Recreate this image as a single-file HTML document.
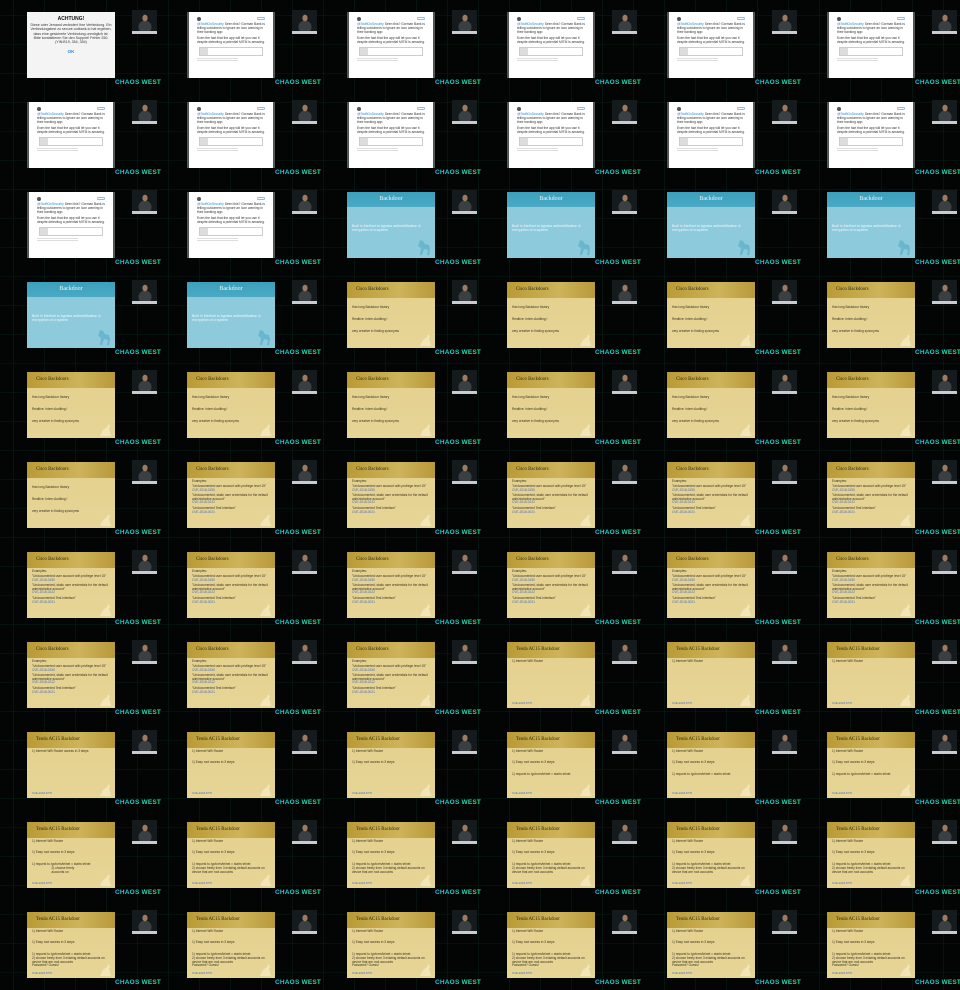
<!DOCTYPE html>
<html><head><meta charset="utf-8"><style>
*{margin:0;padding:0;box-sizing:border-box}
body{width:960px;height:990px;background:#020504;overflow:hidden;font-family:"Liberation Sans",sans-serif;
background-image:repeating-linear-gradient(90deg,rgba(0,0,0,0) 0 13px,rgba(20,60,45,.25) 13px 14px,rgba(0,0,0,0) 14px 31px),repeating-linear-gradient(0deg,rgba(0,0,0,0) 0 17px,rgba(20,60,45,.2) 17px 18px,rgba(0,0,0,0) 18px 29px);}
#g{display:flex;flex-wrap:wrap;width:960px}
.c{position:relative;width:160px;height:90px}
.p{position:absolute;left:132px;top:10px;width:25px;height:24px;background:radial-gradient(ellipse 4px 5px at 13px 8px,#a07a60 60%,transparent 70%),radial-gradient(ellipse 9px 9px at 13px 17px,#3a3f44 70%,transparent 75%),#151a1c;border-bottom:3px solid #c8ccd0}
.w{position:absolute;left:115px;top:79px;font-size:6.5px;font-weight:bold;letter-spacing:.2px;background:linear-gradient(90deg,#18c8e8,#2ee890);-webkit-background-clip:text;color:transparent;white-space:nowrap}
.s{position:absolute;left:27px;top:12px;width:88px;height:66px;overflow:hidden;font-size:3.2px;line-height:3.8px}
.a{background:#f4f4f4;text-align:center;color:#333;padding:4px 3px}
.a h4{font-size:5px;line-height:6px;margin-bottom:1px;color:#111}
.a p{font-size:3.6px;line-height:4.3px}
.a b{display:block;color:#2a8ae0;font-size:4.5px;margin-top:6px}
.t{background:#fff;border-left:2px solid #555;border-right:2px solid #555;padding:5px 8px 0;color:#333}
.t .av{display:block;width:4px;height:4px;background:#555;border-radius:50%;margin-bottom:2px}
.t .fl{position:absolute;right:8px;top:5px;width:8px;height:3px;border:.5px solid #8bf;border-radius:2px}
.t p{margin-bottom:2.5px;font-size:3.3px}
.t p i{color:#2a8ae0;font-style:normal}
.t .bx{display:block;height:9px;margin:2px 2px;border:.5px solid #ccc;background:linear-gradient(90deg,#ddd 0 8px,#fff 8px)}
.t .ft{height:1px;background:#ddd;margin:1px 0;width:60%}
.b{background:#8dcbdc}
.b h4{height:15px;background:linear-gradient(#3b9fbc,#4aaac4);color:#e8f6fa;font-family:"Liberation Serif",serif;font-size:6px;line-height:15px;text-align:center;font-weight:normal}
.b p{color:#eef8fb;font-size:3.6px;line-height:4.2px;padding:17px 5px 0}
.y{background:linear-gradient(#e4d08c,#e6d597);color:#3a3320}
.y h4{height:16px;background:linear-gradient(90deg,#b99a35,#cdb35a 60%,#b8993a);font-family:"Liberation Serif",serif;font-weight:normal;font-size:4.8px;line-height:16px;padding-left:9px;color:#2e2818}
.y p{padding:0 5px;margin-top:1.5px}
.y .l{margin-top:8px}
.y p.u{color:#4a6aa8}
.y .ft{position:absolute;left:5px;bottom:2px;color:#4a6aa8;font-size:2.8px}
.cat{position:absolute;right:3px;bottom:2px;width:14px;height:12px}
.horse{position:absolute;right:3px;bottom:2px;width:16px;height:18px}
</style></head><body><div id="g">
<!-- row 0 -->
<div class="c"><div class="s a"><h4>ACHTUNG!</h4><p>Diese oder Jemand verändert Ihre Verbindung. Ein Verbindungstest zu secure.outbank.io hat ergeben, dass eine gesicherte Verbindung unmöglich ist. Bitte kontaktieren Sie den Support! Fehler 250. (YIN:B19, 354, 354)</p><b>OK</b></div><div class="p"></div><b class="w">CHAOS WEST</b></div>
<div class="c"><div class="s t"><i class="av"></i><i class="fl"></i><p><i>@SwiftOnSecurity</i> Seen this? Gorman Bank is telling customers to ignore an icon warning in their banking app.</p><p>Even the fact that the app will let you use it despite detecting a potential MITM is amazing.</p><i class="bx"></i><div class="ft"></div><div class="ft"></div></div><div class="p"></div><b class="w">CHAOS WEST</b></div>
<div class="c"><div class="s t"><i class="av"></i><i class="fl"></i><p><i>@SwiftOnSecurity</i> Seen this? Gorman Bank is telling customers to ignore an icon warning in their banking app.</p><p>Even the fact that the app will let you use it despite detecting a potential MITM is amazing.</p><i class="bx"></i><div class="ft"></div><div class="ft"></div></div><div class="p"></div><b class="w">CHAOS WEST</b></div>
<div class="c"><div class="s t"><i class="av"></i><i class="fl"></i><p><i>@SwiftOnSecurity</i> Seen this? Gorman Bank is telling customers to ignore an icon warning in their banking app.</p><p>Even the fact that the app will let you use it despite detecting a potential MITM is amazing.</p><i class="bx"></i><div class="ft"></div><div class="ft"></div></div><div class="p"></div><b class="w">CHAOS WEST</b></div>
<div class="c"><div class="s t"><i class="av"></i><i class="fl"></i><p><i>@SwiftOnSecurity</i> Seen this? Gorman Bank is telling customers to ignore an icon warning in their banking app.</p><p>Even the fact that the app will let you use it despite detecting a potential MITM is amazing.</p><i class="bx"></i><div class="ft"></div><div class="ft"></div></div><div class="p"></div><b class="w">CHAOS WEST</b></div>
<div class="c"><div class="s t"><i class="av"></i><i class="fl"></i><p><i>@SwiftOnSecurity</i> Seen this? Gorman Bank is telling customers to ignore an icon warning in their banking app.</p><p>Even the fact that the app will let you use it despite detecting a potential MITM is amazing.</p><i class="bx"></i><div class="ft"></div><div class="ft"></div></div><div class="p"></div><b class="w">CHAOS WEST</b></div>
<!-- row 1 -->
<div class="c"><div class="s t"><i class="av"></i><i class="fl"></i><p><i>@SwiftOnSecurity</i> Seen this? Gorman Bank is telling customers to ignore an icon warning in their banking app.</p><p>Even the fact that the app will let you use it despite detecting a potential MITM is amazing.</p><i class="bx"></i><div class="ft"></div><div class="ft"></div></div><div class="p"></div><b class="w">CHAOS WEST</b></div>
<div class="c"><div class="s t"><i class="av"></i><i class="fl"></i><p><i>@SwiftOnSecurity</i> Seen this? Gorman Bank is telling customers to ignore an icon warning in their banking app.</p><p>Even the fact that the app will let you use it despite detecting a potential MITM is amazing.</p><i class="bx"></i><div class="ft"></div><div class="ft"></div></div><div class="p"></div><b class="w">CHAOS WEST</b></div>
<div class="c"><div class="s t"><i class="av"></i><i class="fl"></i><p><i>@SwiftOnSecurity</i> Seen this? Gorman Bank is telling customers to ignore an icon warning in their banking app.</p><p>Even the fact that the app will let you use it despite detecting a potential MITM is amazing.</p><i class="bx"></i><div class="ft"></div><div class="ft"></div></div><div class="p"></div><b class="w">CHAOS WEST</b></div>
<div class="c"><div class="s t"><i class="av"></i><i class="fl"></i><p><i>@SwiftOnSecurity</i> Seen this? Gorman Bank is telling customers to ignore an icon warning in their banking app.</p><p>Even the fact that the app will let you use it despite detecting a potential MITM is amazing.</p><i class="bx"></i><div class="ft"></div><div class="ft"></div></div><div class="p"></div><b class="w">CHAOS WEST</b></div>
<div class="c"><div class="s t"><i class="av"></i><i class="fl"></i><p><i>@SwiftOnSecurity</i> Seen this? Gorman Bank is telling customers to ignore an icon warning in their banking app.</p><p>Even the fact that the app will let you use it despite detecting a potential MITM is amazing.</p><i class="bx"></i><div class="ft"></div><div class="ft"></div></div><div class="p"></div><b class="w">CHAOS WEST</b></div>
<div class="c"><div class="s t"><i class="av"></i><i class="fl"></i><p><i>@SwiftOnSecurity</i> Seen this? Gorman Bank is telling customers to ignore an icon warning in their banking app.</p><p>Even the fact that the app will let you use it despite detecting a potential MITM is amazing.</p><i class="bx"></i><div class="ft"></div><div class="ft"></div></div><div class="p"></div><b class="w">CHAOS WEST</b></div>
<!-- row 2 -->
<div class="c"><div class="s t"><i class="av"></i><i class="fl"></i><p><i>@SwiftOnSecurity</i> Seen this? Gorman Bank is telling customers to ignore an icon warning in their banking app.</p><p>Even the fact that the app will let you use it despite detecting a potential MITM is amazing.</p><i class="bx"></i><div class="ft"></div><div class="ft"></div></div><div class="p"></div><b class="w">CHAOS WEST</b></div>
<div class="c"><div class="s t"><i class="av"></i><i class="fl"></i><p><i>@SwiftOnSecurity</i> Seen this? Gorman Bank is telling customers to ignore an icon warning in their banking app.</p><p>Even the fact that the app will let you use it despite detecting a potential MITM is amazing.</p><i class="bx"></i><div class="ft"></div><div class="ft"></div></div><div class="p"></div><b class="w">CHAOS WEST</b></div>
<div class="c"><div class="s b"><h4>Backdoor</h4><p>Built in Method to bypass authentification &amp; encryption of a system</p><svg class="horse" viewBox="0 0 16 18"><path d="M4 2l3 1 2 3 4 1 1 4-1 6h-2l1-5-4-1-2 6H4l1-7-3-2z" fill="#6ab6cf"/></svg></div><div class="p"></div><b class="w">CHAOS WEST</b></div>
<div class="c"><div class="s b"><h4>Backdoor</h4><p>Built in Method to bypass authentification &amp; encryption of a system</p><svg class="horse" viewBox="0 0 16 18"><path d="M4 2l3 1 2 3 4 1 1 4-1 6h-2l1-5-4-1-2 6H4l1-7-3-2z" fill="#6ab6cf"/></svg></div><div class="p"></div><b class="w">CHAOS WEST</b></div>
<div class="c"><div class="s b"><h4>Backdoor</h4><p>Built in Method to bypass authentification &amp; encryption of a system</p><svg class="horse" viewBox="0 0 16 18"><path d="M4 2l3 1 2 3 4 1 1 4-1 6h-2l1-5-4-1-2 6H4l1-7-3-2z" fill="#6ab6cf"/></svg></div><div class="p"></div><b class="w">CHAOS WEST</b></div>
<div class="c"><div class="s b"><h4>Backdoor</h4><p>Built in Method to bypass authentification &amp; encryption of a system</p><svg class="horse" viewBox="0 0 16 18"><path d="M4 2l3 1 2 3 4 1 1 4-1 6h-2l1-5-4-1-2 6H4l1-7-3-2z" fill="#6ab6cf"/></svg></div><div class="p"></div><b class="w">CHAOS WEST</b></div>
<!-- row 3 -->
<div class="c"><div class="s b"><h4>Backdoor</h4><p>Built in Method to bypass authentification &amp; encryption of a system</p><svg class="horse" viewBox="0 0 16 18"><path d="M4 2l3 1 2 3 4 1 1 4-1 6h-2l1-5-4-1-2 6H4l1-7-3-2z" fill="#6ab6cf"/></svg></div><div class="p"></div><b class="w">CHAOS WEST</b></div>
<div class="c"><div class="s b"><h4>Backdoor</h4><p>Built in Method to bypass authentification &amp; encryption of a system</p><svg class="horse" viewBox="0 0 16 18"><path d="M4 2l3 1 2 3 4 1 1 4-1 6h-2l1-5-4-1-2 6H4l1-7-3-2z" fill="#6ab6cf"/></svg></div><div class="p"></div><b class="w">CHAOS WEST</b></div>
<div class="c"><div class="s y"><h4>Cisco Backdoors</h4><p class="l">Has long Backdoor history</p><p class="l">Realtive: Intern Auditing !</p><p class="l">very creative in finding synonyms</p><svg class="cat" viewBox="0 0 14 12"><path d="M2 12l3-6 4-3 1-3 2 2-1 3 2 7z" fill="#f2e6b8"/></svg></div><div class="p"></div><b class="w">CHAOS WEST</b></div>
<div class="c"><div class="s y"><h4>Cisco Backdoors</h4><p class="l">Has long Backdoor history</p><p class="l">Realtive: Intern Auditing !</p><p class="l">very creative in finding synonyms</p><svg class="cat" viewBox="0 0 14 12"><path d="M2 12l3-6 4-3 1-3 2 2-1 3 2 7z" fill="#f2e6b8"/></svg></div><div class="p"></div><b class="w">CHAOS WEST</b></div>
<div class="c"><div class="s y"><h4>Cisco Backdoors</h4><p class="l">Has long Backdoor history</p><p class="l">Realtive: Intern Auditing !</p><p class="l">very creative in finding synonyms</p><svg class="cat" viewBox="0 0 14 12"><path d="M2 12l3-6 4-3 1-3 2 2-1 3 2 7z" fill="#f2e6b8"/></svg></div><div class="p"></div><b class="w">CHAOS WEST</b></div>
<div class="c"><div class="s y"><h4>Cisco Backdoors</h4><p class="l">Has long Backdoor history</p><p class="l">Realtive: Intern Auditing !</p><p class="l">very creative in finding synonyms</p><svg class="cat" viewBox="0 0 14 12"><path d="M2 12l3-6 4-3 1-3 2 2-1 3 2 7z" fill="#f2e6b8"/></svg></div><div class="p"></div><b class="w">CHAOS WEST</b></div>
<!-- row 4 -->
<div class="c"><div class="s y"><h4>Cisco Backdoors</h4><p class="l">Has long Backdoor history</p><p class="l">Realtive: Intern Auditing !</p><p class="l">very creative in finding synonyms</p><svg class="cat" viewBox="0 0 14 12"><path d="M2 12l3-6 4-3 1-3 2 2-1 3 2 7z" fill="#f2e6b8"/></svg></div><div class="p"></div><b class="w">CHAOS WEST</b></div>
<div class="c"><div class="s y"><h4>Cisco Backdoors</h4><p class="l">Has long Backdoor history</p><p class="l">Realtive: Intern Auditing !</p><p class="l">very creative in finding synonyms</p><svg class="cat" viewBox="0 0 14 12"><path d="M2 12l3-6 4-3 1-3 2 2-1 3 2 7z" fill="#f2e6b8"/></svg></div><div class="p"></div><b class="w">CHAOS WEST</b></div>
<div class="c"><div class="s y"><h4>Cisco Backdoors</h4><p class="l">Has long Backdoor history</p><p class="l">Realtive: Intern Auditing !</p><p class="l">very creative in finding synonyms</p><svg class="cat" viewBox="0 0 14 12"><path d="M2 12l3-6 4-3 1-3 2 2-1 3 2 7z" fill="#f2e6b8"/></svg></div><div class="p"></div><b class="w">CHAOS WEST</b></div>
<div class="c"><div class="s y"><h4>Cisco Backdoors</h4><p class="l">Has long Backdoor history</p><p class="l">Realtive: Intern Auditing !</p><p class="l">very creative in finding synonyms</p><svg class="cat" viewBox="0 0 14 12"><path d="M2 12l3-6 4-3 1-3 2 2-1 3 2 7z" fill="#f2e6b8"/></svg></div><div class="p"></div><b class="w">CHAOS WEST</b></div>
<div class="c"><div class="s y"><h4>Cisco Backdoors</h4><p class="l">Has long Backdoor history</p><p class="l">Realtive: Intern Auditing !</p><p class="l">very creative in finding synonyms</p><svg class="cat" viewBox="0 0 14 12"><path d="M2 12l3-6 4-3 1-3 2 2-1 3 2 7z" fill="#f2e6b8"/></svg></div><div class="p"></div><b class="w">CHAOS WEST</b></div>
<div class="c"><div class="s y"><h4>Cisco Backdoors</h4><p class="l">Has long Backdoor history</p><p class="l">Realtive: Intern Auditing !</p><p class="l">very creative in finding synonyms</p><svg class="cat" viewBox="0 0 14 12"><path d="M2 12l3-6 4-3 1-3 2 2-1 3 2 7z" fill="#f2e6b8"/></svg></div><div class="p"></div><b class="w">CHAOS WEST</b></div>
<!-- row 5 -->
<div class="c"><div class="s y"><h4>Cisco Backdoors</h4><p class="l">Has long Backdoor history</p><p class="l">Realtive: Intern Auditing !</p><p class="l">very creative in finding synonyms</p><svg class="cat" viewBox="0 0 14 12"><path d="M2 12l3-6 4-3 1-3 2 2-1 3 2 7z" fill="#f2e6b8"/></svg></div><div class="p"></div><b class="w">CHAOS WEST</b></div>
<div class="c"><div class="s y"><h4>Cisco Backdoors</h4><p>Examples:</p><p>"Undocumented user account with privilege level 15"<br><span style="color:#4a6aa8">CVE-2018-0150</span></p><p>"Undocumented, static user credentials for the default administrative account"<br><span style="color:#4a6aa8">CVE-2018-0222</span></p><p>"Undocumented Test Interface"<br><span style="color:#4a6aa8">CVE-2018-0021</span></p><svg class="cat" viewBox="0 0 14 12"><path d="M2 12l3-6 4-3 1-3 2 2-1 3 2 7z" fill="#f2e6b8"/></svg></div><div class="p"></div><b class="w">CHAOS WEST</b></div>
<div class="c"><div class="s y"><h4>Cisco Backdoors</h4><p>Examples:</p><p>"Undocumented user account with privilege level 15"<br><span style="color:#4a6aa8">CVE-2018-0150</span></p><p>"Undocumented, static user credentials for the default administrative account"<br><span style="color:#4a6aa8">CVE-2018-0222</span></p><p>"Undocumented Test Interface"<br><span style="color:#4a6aa8">CVE-2018-0021</span></p><svg class="cat" viewBox="0 0 14 12"><path d="M2 12l3-6 4-3 1-3 2 2-1 3 2 7z" fill="#f2e6b8"/></svg></div><div class="p"></div><b class="w">CHAOS WEST</b></div>
<div class="c"><div class="s y"><h4>Cisco Backdoors</h4><p>Examples:</p><p>"Undocumented user account with privilege level 15"<br><span style="color:#4a6aa8">CVE-2018-0150</span></p><p>"Undocumented, static user credentials for the default administrative account"<br><span style="color:#4a6aa8">CVE-2018-0222</span></p><p>"Undocumented Test Interface"<br><span style="color:#4a6aa8">CVE-2018-0021</span></p><svg class="cat" viewBox="0 0 14 12"><path d="M2 12l3-6 4-3 1-3 2 2-1 3 2 7z" fill="#f2e6b8"/></svg></div><div class="p"></div><b class="w">CHAOS WEST</b></div>
<div class="c"><div class="s y"><h4>Cisco Backdoors</h4><p>Examples:</p><p>"Undocumented user account with privilege level 15"<br><span style="color:#4a6aa8">CVE-2018-0150</span></p><p>"Undocumented, static user credentials for the default administrative account"<br><span style="color:#4a6aa8">CVE-2018-0222</span></p><p>"Undocumented Test Interface"<br><span style="color:#4a6aa8">CVE-2018-0021</span></p><svg class="cat" viewBox="0 0 14 12"><path d="M2 12l3-6 4-3 1-3 2 2-1 3 2 7z" fill="#f2e6b8"/></svg></div><div class="p"></div><b class="w">CHAOS WEST</b></div>
<div class="c"><div class="s y"><h4>Cisco Backdoors</h4><p>Examples:</p><p>"Undocumented user account with privilege level 15"<br><span style="color:#4a6aa8">CVE-2018-0150</span></p><p>"Undocumented, static user credentials for the default administrative account"<br><span style="color:#4a6aa8">CVE-2018-0222</span></p><p>"Undocumented Test Interface"<br><span style="color:#4a6aa8">CVE-2018-0021</span></p><svg class="cat" viewBox="0 0 14 12"><path d="M2 12l3-6 4-3 1-3 2 2-1 3 2 7z" fill="#f2e6b8"/></svg></div><div class="p"></div><b class="w">CHAOS WEST</b></div>
<!-- row 6 -->
<div class="c"><div class="s y"><h4>Cisco Backdoors</h4><p>Examples:</p><p>"Undocumented user account with privilege level 15"<br><span style="color:#4a6aa8">CVE-2018-0150</span></p><p>"Undocumented, static user credentials for the default administrative account"<br><span style="color:#4a6aa8">CVE-2018-0222</span></p><p>"Undocumented Test Interface"<br><span style="color:#4a6aa8">CVE-2018-0021</span></p><svg class="cat" viewBox="0 0 14 12"><path d="M2 12l3-6 4-3 1-3 2 2-1 3 2 7z" fill="#f2e6b8"/></svg></div><div class="p"></div><b class="w">CHAOS WEST</b></div>
<div class="c"><div class="s y"><h4>Cisco Backdoors</h4><p>Examples:</p><p>"Undocumented user account with privilege level 15"<br><span style="color:#4a6aa8">CVE-2018-0150</span></p><p>"Undocumented, static user credentials for the default administrative account"<br><span style="color:#4a6aa8">CVE-2018-0222</span></p><p>"Undocumented Test Interface"<br><span style="color:#4a6aa8">CVE-2018-0021</span></p><svg class="cat" viewBox="0 0 14 12"><path d="M2 12l3-6 4-3 1-3 2 2-1 3 2 7z" fill="#f2e6b8"/></svg></div><div class="p"></div><b class="w">CHAOS WEST</b></div>
<div class="c"><div class="s y"><h4>Cisco Backdoors</h4><p>Examples:</p><p>"Undocumented user account with privilege level 15"<br><span style="color:#4a6aa8">CVE-2018-0150</span></p><p>"Undocumented, static user credentials for the default administrative account"<br><span style="color:#4a6aa8">CVE-2018-0222</span></p><p>"Undocumented Test Interface"<br><span style="color:#4a6aa8">CVE-2018-0021</span></p><svg class="cat" viewBox="0 0 14 12"><path d="M2 12l3-6 4-3 1-3 2 2-1 3 2 7z" fill="#f2e6b8"/></svg></div><div class="p"></div><b class="w">CHAOS WEST</b></div>
<div class="c"><div class="s y"><h4>Cisco Backdoors</h4><p>Examples:</p><p>"Undocumented user account with privilege level 15"<br><span style="color:#4a6aa8">CVE-2018-0150</span></p><p>"Undocumented, static user credentials for the default administrative account"<br><span style="color:#4a6aa8">CVE-2018-0222</span></p><p>"Undocumented Test Interface"<br><span style="color:#4a6aa8">CVE-2018-0021</span></p><svg class="cat" viewBox="0 0 14 12"><path d="M2 12l3-6 4-3 1-3 2 2-1 3 2 7z" fill="#f2e6b8"/></svg></div><div class="p"></div><b class="w">CHAOS WEST</b></div>
<div class="c"><div class="s y"><h4>Cisco Backdoors</h4><p>Examples:</p><p>"Undocumented user account with privilege level 15"<br><span style="color:#4a6aa8">CVE-2018-0150</span></p><p>"Undocumented, static user credentials for the default administrative account"<br><span style="color:#4a6aa8">CVE-2018-0222</span></p><p>"Undocumented Test Interface"<br><span style="color:#4a6aa8">CVE-2018-0021</span></p><svg class="cat" viewBox="0 0 14 12"><path d="M2 12l3-6 4-3 1-3 2 2-1 3 2 7z" fill="#f2e6b8"/></svg></div><div class="p"></div><b class="w">CHAOS WEST</b></div>
<div class="c"><div class="s y"><h4>Cisco Backdoors</h4><p>Examples:</p><p>"Undocumented user account with privilege level 15"<br><span style="color:#4a6aa8">CVE-2018-0150</span></p><p>"Undocumented, static user credentials for the default administrative account"<br><span style="color:#4a6aa8">CVE-2018-0222</span></p><p>"Undocumented Test Interface"<br><span style="color:#4a6aa8">CVE-2018-0021</span></p><svg class="cat" viewBox="0 0 14 12"><path d="M2 12l3-6 4-3 1-3 2 2-1 3 2 7z" fill="#f2e6b8"/></svg></div><div class="p"></div><b class="w">CHAOS WEST</b></div>
<!-- row 7 -->
<div class="c"><div class="s y"><h4>Cisco Backdoors</h4><p>Examples:</p><p>"Undocumented user account with privilege level 15"<br><span style="color:#4a6aa8">CVE-2018-0150</span></p><p>"Undocumented, static user credentials for the default administrative account"<br><span style="color:#4a6aa8">CVE-2018-0222</span></p><p>"Undocumented Test Interface"<br><span style="color:#4a6aa8">CVE-2018-0021</span></p><svg class="cat" viewBox="0 0 14 12"><path d="M2 12l3-6 4-3 1-3 2 2-1 3 2 7z" fill="#f2e6b8"/></svg></div><div class="p"></div><b class="w">CHAOS WEST</b></div>
<div class="c"><div class="s y"><h4>Cisco Backdoors</h4><p>Examples:</p><p>"Undocumented user account with privilege level 15"<br><span style="color:#4a6aa8">CVE-2018-0150</span></p><p>"Undocumented, static user credentials for the default administrative account"<br><span style="color:#4a6aa8">CVE-2018-0222</span></p><p>"Undocumented Test Interface"<br><span style="color:#4a6aa8">CVE-2018-0021</span></p><svg class="cat" viewBox="0 0 14 12"><path d="M2 12l3-6 4-3 1-3 2 2-1 3 2 7z" fill="#f2e6b8"/></svg></div><div class="p"></div><b class="w">CHAOS WEST</b></div>
<div class="c"><div class="s y"><h4>Cisco Backdoors</h4><p>Examples:</p><p>"Undocumented user account with privilege level 15"<br><span style="color:#4a6aa8">CVE-2018-0150</span></p><p>"Undocumented, static user credentials for the default administrative account"<br><span style="color:#4a6aa8">CVE-2018-0222</span></p><p>"Undocumented Test Interface"<br><span style="color:#4a6aa8">CVE-2018-0021</span></p><svg class="cat" viewBox="0 0 14 12"><path d="M2 12l3-6 4-3 1-3 2 2-1 3 2 7z" fill="#f2e6b8"/></svg></div><div class="p"></div><b class="w">CHAOS WEST</b></div>
<div class="c"><div class="s y"><h4>Tenda AC15 Backdoor</h4><p>1) Internet Wifi Router</p><span class="ft">CVE-2018-5770</span><svg class="cat" viewBox="0 0 14 12"><path d="M2 12l3-6 4-3 1-3 2 2-1 3 2 7z" fill="#f2e6b8"/></svg></div><div class="p"></div><b class="w">CHAOS WEST</b></div>
<div class="c"><div class="s y"><h4>Tenda AC15 Backdoor</h4><p>1) Internet Wifi Router</p><span class="ft">CVE-2018-5770</span><svg class="cat" viewBox="0 0 14 12"><path d="M2 12l3-6 4-3 1-3 2 2-1 3 2 7z" fill="#f2e6b8"/></svg></div><div class="p"></div><b class="w">CHAOS WEST</b></div>
<div class="c"><div class="s y"><h4>Tenda AC15 Backdoor</h4><p>1) Internet Wifi Router</p><span class="ft">CVE-2018-5770</span><svg class="cat" viewBox="0 0 14 12"><path d="M2 12l3-6 4-3 1-3 2 2-1 3 2 7z" fill="#f2e6b8"/></svg></div><div class="p"></div><b class="w">CHAOS WEST</b></div>
<!-- row 8 -->
<div class="c"><div class="s y"><h4>Tenda AC15 Backdoor</h4><p>1) Internet Wifi Router access in 3 steps</p><span class="ft">CVE-2018-5770</span><svg class="cat" viewBox="0 0 14 12"><path d="M2 12l3-6 4-3 1-3 2 2-1 3 2 7z" fill="#f2e6b8"/></svg></div><div class="p"></div><b class="w">CHAOS WEST</b></div>
<div class="c"><div class="s y"><h4>Tenda AC15 Backdoor</h4><p>1) Internet Wifi Router</p><p class="l">1) Easy root access in 3 steps</p><span class="ft">CVE-2018-5770</span><svg class="cat" viewBox="0 0 14 12"><path d="M2 12l3-6 4-3 1-3 2 2-1 3 2 7z" fill="#f2e6b8"/></svg></div><div class="p"></div><b class="w">CHAOS WEST</b></div>
<div class="c"><div class="s y"><h4>Tenda AC15 Backdoor</h4><p>1) Internet Wifi Router</p><p class="l">1) Easy root access in 3 steps</p><span class="ft">CVE-2018-5770</span><svg class="cat" viewBox="0 0 14 12"><path d="M2 12l3-6 4-3 1-3 2 2-1 3 2 7z" fill="#f2e6b8"/></svg></div><div class="p"></div><b class="w">CHAOS WEST</b></div>
<div class="c"><div class="s y"><h4>Tenda AC15 Backdoor</h4><p>1) Internet Wifi Router</p><p class="l">1) Easy root access in 3 steps</p><p class="l">1) request to /goform/telnet = starts telnet</p><span class="ft">CVE-2018-5770</span><svg class="cat" viewBox="0 0 14 12"><path d="M2 12l3-6 4-3 1-3 2 2-1 3 2 7z" fill="#f2e6b8"/></svg></div><div class="p"></div><b class="w">CHAOS WEST</b></div>
<div class="c"><div class="s y"><h4>Tenda AC15 Backdoor</h4><p>1) Internet Wifi Router</p><p class="l">1) Easy root access in 3 steps</p><p class="l">1) request to /goform/telnet = starts telnet</p><span class="ft">CVE-2018-5770</span><svg class="cat" viewBox="0 0 14 12"><path d="M2 12l3-6 4-3 1-3 2 2-1 3 2 7z" fill="#f2e6b8"/></svg></div><div class="p"></div><b class="w">CHAOS WEST</b></div>
<div class="c"><div class="s y"><h4>Tenda AC15 Backdoor</h4><p>1) Internet Wifi Router</p><p class="l">1) Easy root access in 3 steps</p><p class="l">1) request to /goform/telnet = starts telnet</p><span class="ft">CVE-2018-5770</span><svg class="cat" viewBox="0 0 14 12"><path d="M2 12l3-6 4-3 1-3 2 2-1 3 2 7z" fill="#f2e6b8"/></svg></div><div class="p"></div><b class="w">CHAOS WEST</b></div>
<!-- row 9 -->
<div class="c"><div class="s y"><h4>Tenda AC15 Backdoor</h4><p>1) Internet Wifi Router</p><p class="l">1) Easy root access in 3 steps</p><p class="l">1) request to /goform/telnet = starts telnet<br>&nbsp;&nbsp;&nbsp;&nbsp;&nbsp;&nbsp;&nbsp;&nbsp;&nbsp;&nbsp;&nbsp;&nbsp;&nbsp;&nbsp;&nbsp;&nbsp;&nbsp;&nbsp;&nbsp;&nbsp;&nbsp;&nbsp;2) choose freely<br>&nbsp;&nbsp;&nbsp;&nbsp;&nbsp;&nbsp;&nbsp;&nbsp;&nbsp;&nbsp;&nbsp;&nbsp;&nbsp;&nbsp;&nbsp;&nbsp;&nbsp;&nbsp;&nbsp;&nbsp;&nbsp;&nbsp;accounts on</p><span class="ft">CVE-2018-5770</span><svg class="cat" viewBox="0 0 14 12"><path d="M2 12l3-6 4-3 1-3 2 2-1 3 2 7z" fill="#f2e6b8"/></svg></div><div class="p"></div><b class="w">CHAOS WEST</b></div>
<div class="c"><div class="s y"><h4>Tenda AC15 Backdoor</h4><p>1) Internet Wifi Router</p><p class="l">1) Easy root access in 3 steps</p><p class="l">1) request to /goform/telnet = starts telnet<br>2) choose freely from 3 existing default accounts on device that are root accounts</p><span class="ft">CVE-2018-5770</span><svg class="cat" viewBox="0 0 14 12"><path d="M2 12l3-6 4-3 1-3 2 2-1 3 2 7z" fill="#f2e6b8"/></svg></div><div class="p"></div><b class="w">CHAOS WEST</b></div>
<div class="c"><div class="s y"><h4>Tenda AC15 Backdoor</h4><p>1) Internet Wifi Router</p><p class="l">1) Easy root access in 3 steps</p><p class="l">1) request to /goform/telnet = starts telnet<br>2) choose freely from 3 existing default accounts on device that are root accounts</p><span class="ft">CVE-2018-5770</span><svg class="cat" viewBox="0 0 14 12"><path d="M2 12l3-6 4-3 1-3 2 2-1 3 2 7z" fill="#f2e6b8"/></svg></div><div class="p"></div><b class="w">CHAOS WEST</b></div>
<div class="c"><div class="s y"><h4>Tenda AC15 Backdoor</h4><p>1) Internet Wifi Router</p><p class="l">1) Easy root access in 3 steps</p><p class="l">1) request to /goform/telnet = starts telnet<br>2) choose freely from 3 existing default accounts on device that are root accounts</p><span class="ft">CVE-2018-5770</span><svg class="cat" viewBox="0 0 14 12"><path d="M2 12l3-6 4-3 1-3 2 2-1 3 2 7z" fill="#f2e6b8"/></svg></div><div class="p"></div><b class="w">CHAOS WEST</b></div>
<div class="c"><div class="s y"><h4>Tenda AC15 Backdoor</h4><p>1) Internet Wifi Router</p><p class="l">1) Easy root access in 3 steps</p><p class="l">1) request to /goform/telnet = starts telnet<br>2) choose freely from 3 existing default accounts on device that are root accounts</p><span class="ft">CVE-2018-5770</span><svg class="cat" viewBox="0 0 14 12"><path d="M2 12l3-6 4-3 1-3 2 2-1 3 2 7z" fill="#f2e6b8"/></svg></div><div class="p"></div><b class="w">CHAOS WEST</b></div>
<div class="c"><div class="s y"><h4>Tenda AC15 Backdoor</h4><p>1) Internet Wifi Router</p><p class="l">1) Easy root access in 3 steps</p><p class="l">1) request to /goform/telnet = starts telnet<br>2) choose freely from 3 existing default accounts on device that are root accounts</p><span class="ft">CVE-2018-5770</span><svg class="cat" viewBox="0 0 14 12"><path d="M2 12l3-6 4-3 1-3 2 2-1 3 2 7z" fill="#f2e6b8"/></svg></div><div class="p"></div><b class="w">CHAOS WEST</b></div>
<!-- row 10 -->
<div class="c"><div class="s y"><h4>Tenda AC15 Backdoor</h4><p>1) Internet Wifi Router</p><p class="l">1) Easy root access in 3 steps</p><p class="l">1) request to /goform/telnet = starts telnet<br>2) choose freely from 3 existing default accounts on device that are root accounts<br>Password? Guess!</p><span class="ft">CVE-2018-5770</span><svg class="cat" viewBox="0 0 14 12"><path d="M2 12l3-6 4-3 1-3 2 2-1 3 2 7z" fill="#f2e6b8"/></svg></div><div class="p"></div><b class="w">CHAOS WEST</b></div>
<div class="c"><div class="s y"><h4>Tenda AC15 Backdoor</h4><p>1) Internet Wifi Router</p><p class="l">1) Easy root access in 3 steps</p><p class="l">1) request to /goform/telnet = starts telnet<br>2) choose freely from 3 existing default accounts on device that are root accounts<br>Password? Guess!</p><span class="ft">CVE-2018-5770</span><svg class="cat" viewBox="0 0 14 12"><path d="M2 12l3-6 4-3 1-3 2 2-1 3 2 7z" fill="#f2e6b8"/></svg></div><div class="p"></div><b class="w">CHAOS WEST</b></div>
<div class="c"><div class="s y"><h4>Tenda AC15 Backdoor</h4><p>1) Internet Wifi Router</p><p class="l">1) Easy root access in 3 steps</p><p class="l">1) request to /goform/telnet = starts telnet<br>2) choose freely from 3 existing default accounts on device that are root accounts<br>Password? Guess!</p><span class="ft">CVE-2018-5770</span><svg class="cat" viewBox="0 0 14 12"><path d="M2 12l3-6 4-3 1-3 2 2-1 3 2 7z" fill="#f2e6b8"/></svg></div><div class="p"></div><b class="w">CHAOS WEST</b></div>
<div class="c"><div class="s y"><h4>Tenda AC15 Backdoor</h4><p>1) Internet Wifi Router</p><p class="l">1) Easy root access in 3 steps</p><p class="l">1) request to /goform/telnet = starts telnet<br>2) choose freely from 3 existing default accounts on device that are root accounts<br>Password? Guess!</p><span class="ft">CVE-2018-5770</span><svg class="cat" viewBox="0 0 14 12"><path d="M2 12l3-6 4-3 1-3 2 2-1 3 2 7z" fill="#f2e6b8"/></svg></div><div class="p"></div><b class="w">CHAOS WEST</b></div>
<div class="c"><div class="s y"><h4>Tenda AC15 Backdoor</h4><p>1) Internet Wifi Router</p><p class="l">1) Easy root access in 3 steps</p><p class="l">1) request to /goform/telnet = starts telnet<br>2) choose freely from 3 existing default accounts on device that are root accounts<br>Password? Guess!</p><span class="ft">CVE-2018-5770</span><svg class="cat" viewBox="0 0 14 12"><path d="M2 12l3-6 4-3 1-3 2 2-1 3 2 7z" fill="#f2e6b8"/></svg></div><div class="p"></div><b class="w">CHAOS WEST</b></div>
<div class="c"><div class="s y"><h4>Tenda AC15 Backdoor</h4><p>1) Internet Wifi Router</p><p class="l">1) Easy root access in 3 steps</p><p class="l">1) request to /goform/telnet = starts telnet<br>2) choose freely from 3 existing default accounts on device that are root accounts<br>Password? Guess!</p><span class="ft">CVE-2018-5770</span><svg class="cat" viewBox="0 0 14 12"><path d="M2 12l3-6 4-3 1-3 2 2-1 3 2 7z" fill="#f2e6b8"/></svg></div><div class="p"></div><b class="w">CHAOS WEST</b></div>
</div></body></html>
